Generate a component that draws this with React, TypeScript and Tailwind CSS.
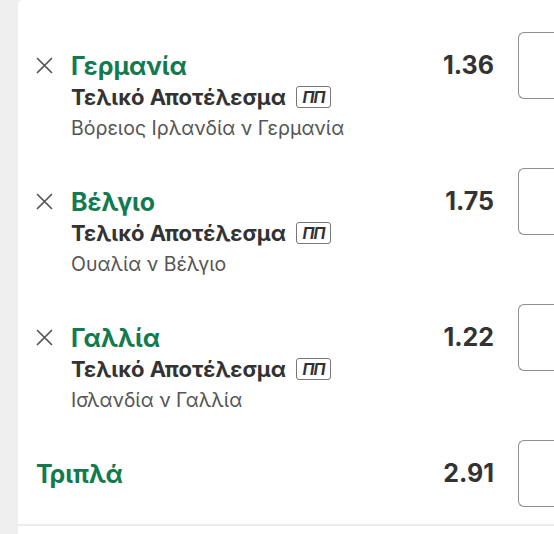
type Leg = {
  pick: string;
  market: string;
  event: string;
  odds: string;
};

const legs: Leg[] = [
  { pick: "Γερμανία", market: "Τελικό Αποτέλεσμα", event: "Βόρειος Ιρλανδία ν Γερμανία", odds: "1.36" },
  { pick: "Βέλγιο", market: "Τελικό Αποτέλεσμα", event: "Ουαλία ν Βέλγιο", odds: "1.75" },
  { pick: "Γαλλία", market: "Τελικό Αποτέλεσμα", event: "Ισλανδία ν Γαλλία", odds: "1.22" },
];

export default function App() {
  return (
    <div
      className="flex h-[534px] w-[554px] overflow-hidden bg-[#efefef]"
      style={{ fontFamily: "Inter, 'Noto Sans', sans-serif" }}
    >
      <div className="ml-[18px] flex-1 overflow-hidden rounded-tl-[5px] bg-white">
        {legs.map((l) => (
          <LegRow key={l.pick} leg={l} />
        ))}

        {/* Τριπλά */}
        <div className="flex h-[116px] items-start pt-[32px] pl-[18px]">
          <div className="flex h-[67px] flex-1 items-center">
            <span className="text-[25px] font-bold leading-[28px] text-[#127a4f]">
              Τριπλά
            </span>
          </div>
          <StakeBox odds="2.91" />
        </div>
        <div className="h-[2px] bg-[#ececec]" />
      </div>
    </div>
  );
}

function LegRow({ leg }: { leg: Leg }) {
  return (
    <div className="flex h-[136px] items-start pt-[32px] pl-[18px]">
      <div className="min-w-0 flex-1">
        <div className="flex h-[67px] items-center">
          <svg width="17" height="17" viewBox="0 0 17 17" className="shrink-0 text-[#555]">
            <path d="M1.5 1.5 L15.5 15.5 M15.5 1.5 L1.5 15.5" stroke="currentColor" strokeWidth="1.7" strokeLinecap="round" />
          </svg>
          <span className="ml-[18px] text-[25px] font-bold leading-[28px] text-[#127a4f]">
            {leg.pick}
          </span>
        </div>
        <div className="-mt-[15px] pl-[35px]">
          <div className="flex items-center gap-[10px] whitespace-nowrap text-[22px] font-bold leading-[26px] text-[#333]">
            {leg.market}
            <span className="inline-flex h-[22px] w-[35px] items-center justify-center rounded-[3px] border border-[#777] text-[16px] font-bold italic leading-none tracking-[-1px] text-[#333]">
              ΠΠ
            </span>
          </div>
          <div className="mt-[5px] whitespace-nowrap text-[19.5px] leading-[26px] text-[#555]">
            {leg.event}
          </div>
        </div>
      </div>
      <StakeBox odds={leg.odds} />
    </div>
  );
}

function StakeBox({ odds }: { odds: string }) {
  return (
    <div className="flex h-[67px] shrink-0 items-center">
      <span className="text-[25px] font-bold text-[#333]">{odds}</span>
      <div className="ml-[24px] h-[67px] w-[36px] rounded-l-[6px] border border-r-0 border-[#8f8f8f]" />
    </div>
  );
}
